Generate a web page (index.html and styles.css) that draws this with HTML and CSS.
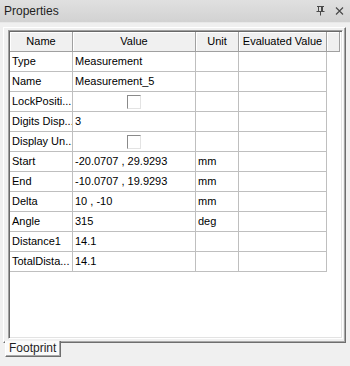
FILE: index.html
```html
<!DOCTYPE html>
<html lang="en">
<head>
    <meta charset="UTF-8">
    <title>Properties</title>
    <link rel="stylesheet" href="styles.css">
</head>
<body>
    <div class="titlebar">
        <span class="title">Properties</span>
        <span class="tools">
            <svg class="pin" width="9" height="10" viewBox="0 0 9 10">
                <path d="M1 0.5h7 M2.5 0.5v5 M6.5 0.5v5 M5.5 0.5v5 M0.5 5.5h8 M4.5 5.5v4" stroke="#4a4a4a" stroke-width="1" fill="none"/>
            </svg>
            <svg class="close" width="9" height="8" viewBox="0 0 9 8">
                <path d="M1 0.5l7 7 M8 0.5l-7 7" stroke="#4a4a4a" stroke-width="1.2" fill="none"/>
            </svg>
        </span>
    </div>

    <div class="page">
        <div class="grid-box">
            <div class="row head">
                <div class="hcell">Name</div>
                <div class="hcell">Value</div>
                <div class="hcell">Unit</div>
                <div class="hcell">Evaluated Value</div>
                <div class="hcell"></div>
            </div>
            <div class="row"><div class="cell">Type</div><div class="cell">Measurement</div><div class="cell"></div><div class="cell"></div></div>
            <div class="row"><div class="cell">Name</div><div class="cell">Measurement_5</div><div class="cell"></div><div class="cell"></div></div>
            <div class="row"><div class="cell">LockPositi...</div><div class="cell center"><span class="check"></span></div><div class="cell"></div><div class="cell"></div></div>
            <div class="row"><div class="cell">Digits Disp...</div><div class="cell">3</div><div class="cell"></div><div class="cell"></div></div>
            <div class="row"><div class="cell">Display Un...</div><div class="cell center"><span class="check"></span></div><div class="cell"></div><div class="cell"></div></div>
            <div class="row"><div class="cell">Start</div><div class="cell">-20.0707 , 29.9293</div><div class="cell">mm</div><div class="cell"></div></div>
            <div class="row"><div class="cell">End</div><div class="cell">-10.0707 , 19.9293</div><div class="cell">mm</div><div class="cell"></div></div>
            <div class="row"><div class="cell">Delta</div><div class="cell">10 , -10</div><div class="cell">mm</div><div class="cell"></div></div>
            <div class="row"><div class="cell">Angle</div><div class="cell">315</div><div class="cell">deg</div><div class="cell"></div></div>
            <div class="row"><div class="cell">Distance1</div><div class="cell">14.1</div><div class="cell"></div><div class="cell"></div></div>
            <div class="row"><div class="cell">TotalDista...</div><div class="cell">14.1</div><div class="cell"></div><div class="cell"></div></div>
        </div>
    </div>

    <div class="tabs">
        <div class="tab">Footprint</div>
    </div>
</body>
</html>
```

FILE: styles.css
```css
body {
    margin: 0;
    width: 350px;
    height: 366px;
    background: #f0f0f0;
    font-family: "Liberation Sans", Arial, sans-serif;
    font-size: 11px;
    color: #000;
    overflow: hidden;
}
.titlebar {
    height: 22px;
    display: flex;
    align-items: center;
    justify-content: space-between;
    padding: 0 6px 0 4px;
    background: linear-gradient(#e0e0e0, #d2d2d2);
    border-bottom: 1px solid #e8e8e8;
}
.title {
    font-size: 12px;
    color: #1e1e1e;
}
.tools {
    display: flex;
    align-items: center;
    gap: 10px;
}
.page {
    margin: 4px 4px 0 3px;
    height: 310px;
    padding: 2px 2px 2px 4px;
    border: 1px solid;
    border-color: #fff #6e6e6e #6e6e6e #fff;
    box-shadow: inset -1px -1px 0 #a8a8a8;
}
.grid-box {
    height: 306px;
    background: #fff;
    border: 1px solid;
    border-color: #a0a0a0 #fff #fff #a0a0a0;
    box-shadow: inset 1px 1px 0 #696969, inset -1px -1px 0 #e3e3e3;
    padding: 1px 0 0 1px;
}
.row {
    display: grid;
    grid-template-columns: 63px 123px 43px 88px;
    height: 20px;
}
.row.head {
    grid-template-columns: 63px 123px 43px 88px 13px;
}
.hcell {
    background: #f0f0f0;
    border-right: 1px solid #a0a0a0;
    border-bottom: 1px solid #a0a0a0;
    box-shadow: inset 1px 1px 0 #fff;
    text-align: center;
    line-height: 19px;
    white-space: nowrap;
    overflow: hidden;
}
.cell {
    border-right: 1px solid #bfbfbf;
    border-bottom: 1px solid #bfbfbf;
    line-height: 19px;
    padding-left: 2px;
    white-space: nowrap;
    overflow: hidden;
}
.cell.center {
    display: flex;
    align-items: center;
    justify-content: center;
    padding-left: 0;
}
.check {
    width: 12px;
    height: 12px;
    background: #fff;
    border: 1px solid;
    border-color: #8a8a8a #e3e3e3 #e3e3e3 #8a8a8a;
}
.tabs {
    display: flex;
    padding-left: 5px;
    margin-top: -2px;
}
.tab {
    width: 48px;
    height: 15px;
    padding: 0 3px 0 3px;
    background: #fafafa;
    border-left: 1px solid #fff;
    border-right: 1px solid #6e6e6e;
    border-bottom: 1px solid #6e6e6e;
    box-shadow: inset -1px -1px 0 #a8a8a8;
    font-size: 12px;
    line-height: 15px;
    color: #1e1e1e;
}
```
